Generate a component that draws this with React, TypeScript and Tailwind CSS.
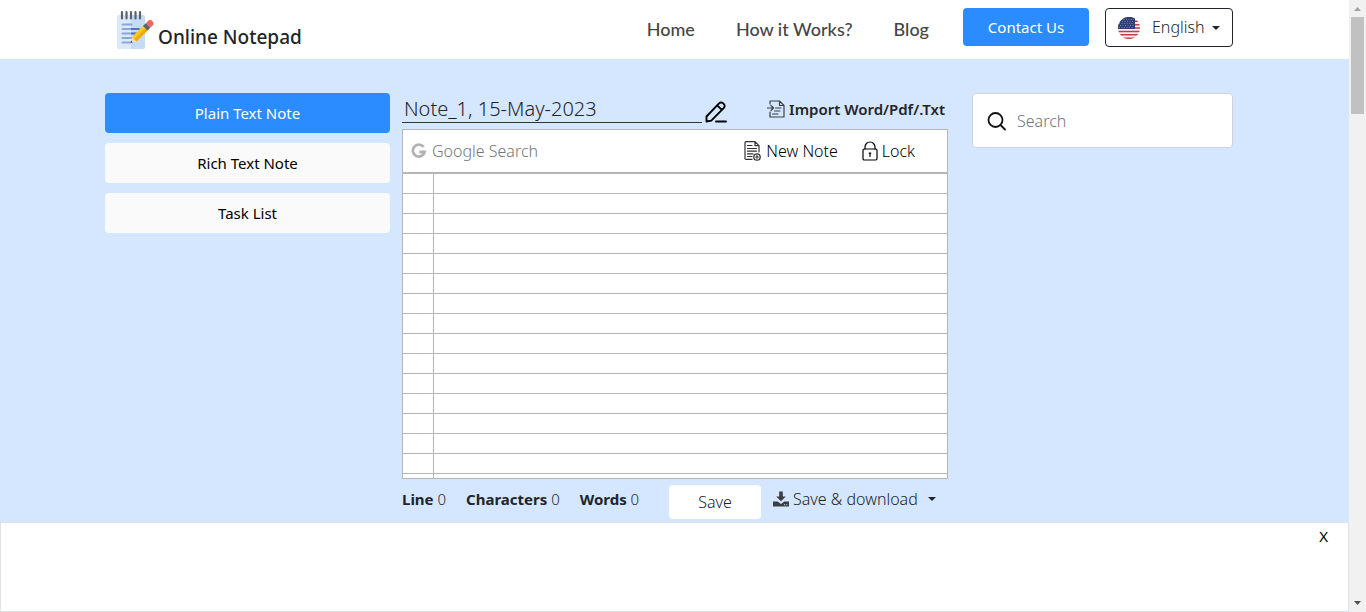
import React from "react";

const stroke = {
  fill: "none",
  stroke: "currentColor",
  strokeLinecap: "round" as const,
  strokeLinejoin: "round" as const,
};

function LogoIcon() {
  return (
    <svg viewBox="0 0 37 40" className="h-10 w-[37px] shrink-0" aria-hidden="true">
      <path d="M2 5h12v34H2a2 2 0 0 1-2-2V7a2 2 0 0 1 2-2z" fill="#dbe9fb" />
      <path d="M14 5h12a2 2 0 0 1 2 2v30a2 2 0 0 1-2 2H14z" fill="#c5dcf8" />
      <path d="M5 2v6.500M9.500 2v6.500M14 2v6.500M18.500 2v6.500M23 2v6.500" stroke="#5b6371" strokeWidth="2.200" strokeLinecap="round" />
      <path d="M5.500 14.500h9M5.500 19h17M5.500 23.500h15M5.500 28h12M5.500 32.500h8" stroke="#8ba6d8" strokeWidth="2" strokeLinecap="round" />
      <path d="M14 19h8.500M14 23.500h6" stroke="#5874b8" strokeWidth="2" />
      <path d="M13.500 33l1.500-6 4.500 4.500z" fill="#f5dcc0" />
      <path d="M13.500 33l.6-2.400 1.800 1.800z" fill="#454c58" />
      <path d="M15 27L27.500 14.500l4.500 4.500-12.500 12.500z" fill="#ffc91f" />
      <path d="M17.300 29.300L29.700 16.800 32 19 19.500 31.500z" fill="#f0a913" />
      <path d="M26 16l3-3 4.500 4.500-3 3z" fill="#5b6371" />
      <path d="M29 13l1.800-1.800a2.900 2.900 0 0 1 4.700 0 2.900 2.900 0 0 1 0 4.500L33.500 17.500z" fill="#f5635f" />
    </svg>
  );
}

function FlagIcon() {
  return (
    <svg viewBox="0 0 22 22" className="size-[22px] shrink-0" aria-hidden="true">
      <defs>
        <clipPath id="flag-circle">
          <circle cx="11" cy="11" r="11" />
        </clipPath>
      </defs>
      <g clipPath="url(#flag-circle)">
        <rect width="22" height="22" fill="#f6eff0" />
        <path d="M0 .850h22M0 4.250h22M0 7.650h22M0 11.050h22M0 14.450h22M0 17.850h22M0 21.200h22" stroke="#c73a47" strokeWidth="1.500" />
        <rect width="17" height="12" fill="#2d3f73" />
        <path d="M3 2.500h13M4 4.500h12M1 6.500h15M2 8.500h14M1 10.500h15" stroke="#8490b8" strokeWidth=".8" strokeDasharray="1 1.500" />
      </g>
    </svg>
  );
}

function EditIcon() {
  return (
    <svg viewBox="0 0 22 22" className="size-[22px]" {...stroke} strokeWidth="1.900" aria-hidden="true">
      <path d="M1.500 20.500v-5L14.300 2.200a2.500 2.500 0 0 1 3.600 0l1 1a2.500 2.500 0 0 1 0 3.600L6.300 19.600zM12.300 4.300l4.500 4.500M11 20.500h10" />
    </svg>
  );
}

function ImportIcon() {
  return (
    <svg viewBox="0 0 18 18" className="size-[18px] shrink-0 text-[#3c4043]" {...stroke} strokeWidth="1.200" aria-hidden="true">
      <path d="M3 4V1h9.500L17 5.500V17H3v-5M12.500 1v4.500H17M0 8h6M4 5.500L6.500 8 4 10.500M8.500 8H14M7.500 11H13M5.500 14H11" />
    </svg>
  );
}

function NewNoteIcon() {
  return (
    <svg viewBox="0 0 18 20" className="h-5 w-[18px] shrink-0 text-[#333]" {...stroke} strokeWidth="1.200" aria-hidden="true">
      <path d="M8 18.400H2A1 1 0 0 1 1 17.400V1.600a1 1 0 0 1 1-1h9l4 4V11M11 .600v4h4M3.500 4.500H8M3.500 7.500h9M3.500 10.200h9M3.500 12.900H9M3.500 15.500H8" />
      <circle cx="13" cy="16" r="3.200" strokeWidth="1.300" />
      <path d="M13 14.700v2.600M11.700 16h2.600" strokeWidth="1.200" />
    </svg>
  );
}

function LockIcon() {
  return (
    <svg viewBox="0 0 16 20" className="h-5 w-4 shrink-0" {...stroke} strokeWidth="1.200" aria-hidden="true">
      <rect x="1" y="8" width="14" height="11" rx="1.200" />
      <path d="M3 8V6a5 5 0 0 1 10 0v2" />
      <path d="M8 12v3.500M7.200 12.200h1.600" strokeWidth="1.200" />
    </svg>
  );
}

function GoogleIcon() {
  return (
    <svg viewBox="0 0 16 16" className="size-4 shrink-0" aria-hidden="true">
      <path d="M12.600 3.900A6 6 0 1 0 13.700 9H8.300" fill="none" stroke="#b3b3b3" strokeWidth="2.800" />
    </svg>
  );
}

function SearchIcon() {
  return (
    <svg viewBox="0 0 20 20" className="size-5 shrink-0 text-[#111]" {...stroke} strokeWidth="1.800" aria-hidden="true">
      <circle cx="8.500" cy="9" r="7" />
      <path d="M13.500 14l4.500 4.500" />
    </svg>
  );
}

function DownloadIcon() {
  return (
    <svg viewBox="0 0 16 16" className="size-4 shrink-0" fill="#3b3f44" aria-hidden="true">
      <path d="M6.200.500h3.600V5.500h3L8 10.300 3.200 5.500h3z" />
      <path fillRule="evenodd" d="M0 10.500h4.800L8 13l3.200-2.500H16V15.500H0zM11 13.200v1h1v-1zM13.200 13.200v1h1v-1z" />
    </svg>
  );
}

function Caret() {
  return (
    <svg viewBox="0 0 8 4" className="h-1 w-2 shrink-0" aria-hidden="true">
      <path d="M0 0h8L4 4z" fill="currentColor" />
    </svg>
  );
}

const noteTypes = ["Plain Text Note", "Rich Text Note", "Task List"];
const links = ["Home", "How it Works?", "Blog"];
const counters = ["Line", "Characters", "Words"];

export default function App() {
  return (
    <div className="flex min-h-screen bg-[#d5e7ff] font-['Noto_Sans','Open_Sans',sans-serif] text-base leading-6 font-light text-[#212529]">
      <div className="flex min-w-0 flex-1 flex-col">
        <header className="bg-white">
          <div className="mx-auto flex h-[59px] max-w-[1139px] items-start justify-between pr-[11px] pl-3">
            <a href="#" className="flex pt-[10px] text-[19px] font-medium">
              <LogoIcon />
              <span className="pt-[15px] pl-1">Online Notepad</span>
            </a>
            <div className="flex items-start pt-2">
              <nav className="flex gap-[41px] pt-2 pr-[34px] font-['Lato',sans-serif] text-lg leading-[26px] font-medium text-[#444]">
                {links.map((l) => (
                  <a key={l} href="#">{l}</a>
                ))}
              </nav>
              <button className="mr-4 h-[38px] w-[126px] rounded bg-[#2a8cff] text-[15px] font-normal text-white">Contact Us</button>
              <button className="flex h-[39px] w-32 items-center rounded border border-[#212529] pl-3">
                <FlagIcon />
                <span className="pr-2 pb-[2px] pl-3">English</span>
                <Caret />
              </button>
            </div>
          </div>
        </header>

        <main className="mx-auto flex w-full max-w-[1139px] flex-1 items-start pt-[34px] pr-[11px] pb-[3px]">
          <div className="flex w-[285px] shrink-0 flex-col gap-[10px] text-[15px]">
            {noteTypes.map((t, i) => (
              <button
                key={t}
                className={
                  i === 0
                    ? "h-10 rounded bg-[#2a8cff] font-normal text-white"
                    : "h-10 rounded bg-[#fafafa] font-normal text-black"
                }
              >
                {t}
              </button>
            ))}
          </div>

          <section className="ml-3 min-w-0 flex-1">
            <div className="flex h-9 items-start">
              <input
                aria-label="Note title"
                defaultValue="Note_1, 15-May-2023"
                className="h-[30px] w-[300px] border-b border-[#333] bg-transparent px-[2px] pt-[2px] text-xl outline-none"
              />
              <button aria-label="Edit title" className="ml-[3px] pt-2 text-black">
                <EditIcon />
              </button>
              <button className="mt-1 mr-[3px] ml-auto flex items-center gap-1 text-[15px] font-semibold">
                <ImportIcon />
                Import Word/Pdf/.Txt
              </button>
            </div>
            <div className="border border-[#b5b5b5] bg-white">
              <div className="flex h-[44px] items-center border-b-2 border-[#b5b5b5] text-black">
                <label className="flex min-w-0 flex-1 items-center gap-[5px] pl-2">
                  <GoogleIcon />
                  <input
                    aria-label="Google Search"
                    placeholder="Google Search"
                    className="min-w-0 flex-1 bg-transparent outline-none placeholder:text-[#757575]"
                  />
                </label>
                <button className="flex items-center gap-1">
                  <NewNoteIcon />
                  New Note
                </button>
                <button className="mr-8 ml-6 flex items-center gap-1">
                  <LockIcon />
                  Lock
                </button>
              </div>
              <textarea
                aria-label="Note text"
                className="block h-[304px] w-full resize-none bg-[linear-gradient(to_right,transparent_30px,#b5b5b5_30px,#b5b5b5_31px,transparent_31px),repeating-linear-gradient(to_bottom,transparent_0px,transparent_19px,#b5b5b5_19px,#b5b5b5_20px)] pl-10 leading-5 outline-none"
              />
            </div>
            <div className="flex h-10 items-start">
              <div className="flex w-[267px] gap-5 pt-2 text-[15px]">
                {counters.map((c) => (
                  <span key={c} className="whitespace-nowrap">
                    <b className="font-bold">{c}</b> 0
                  </span>
                ))}
              </div>
              <button className="mt-[6px] h-[34px] w-[92px] rounded bg-white">Save</button>
              <button className="mt-2 ml-3 flex items-center">
                <DownloadIcon />
                <span className="pr-[10px] pl-1">Save &amp; download</span>
                <Caret />
              </button>
            </div>
          </section>

          <label className="ml-6 flex h-[55px] w-[261px] shrink-0 items-center gap-[10px] rounded border border-[#ced4da] bg-white pl-[14px]">
            <SearchIcon />
            <input
              aria-label="Search"
              placeholder="Search"
              className="min-w-0 flex-1 bg-transparent outline-none placeholder:text-[#6c757d]"
            />
          </label>
        </main>

        <aside className="flex h-[90px] items-start justify-end border border-[#dee2e6] bg-white pt-[2px] pr-5">
          <button aria-label="Close" className="text-[15px] leading-[22px] font-normal text-black">X</button>
        </aside>
      </div>

      <div className="flex w-[17px] shrink-0 flex-col items-center bg-[#f1f1f1]" aria-hidden="true">
        <svg viewBox="0 0 17 17" className="size-[17px]">
          <path d="M5 11h7L8.500 7z" fill="#a3a3a3" />
        </svg>
        <div className="h-[97px] w-[13px] bg-[#c1c1c1]" />
        <svg viewBox="0 0 17 17" className="mt-auto size-[17px]">
          <path d="M5 6h7l-3.500 4z" fill="#505050" />
        </svg>
      </div>
    </div>
  );
}
